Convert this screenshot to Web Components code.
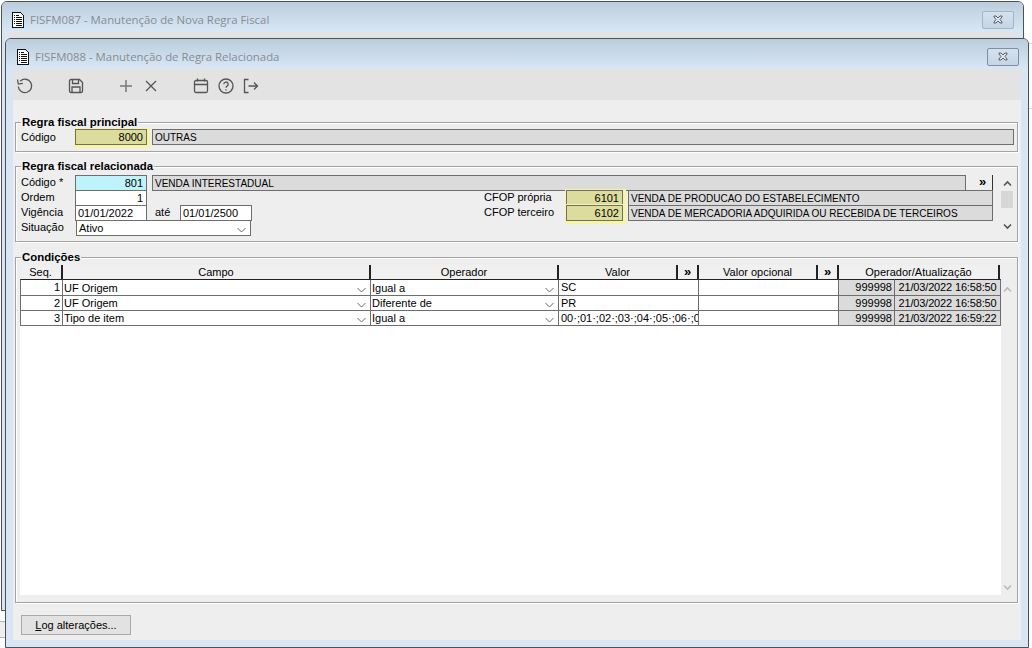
<!DOCTYPE html>
<html lang="pt">
<head>
<meta charset="utf-8">
<title>FISFM088</title>
<style>
    html, body { margin: 0; height: 100%; background: #fff; overflow: hidden; }
    body { position: relative; width: 1032px; height: 648px; font: 11px "Liberation Sans", Arial, sans-serif; color: #000; }
</style>
</head>
<body>

<template id="doc-icon">
    <svg width="14" height="16" viewBox="0 0 14 16" shape-rendering="crispEdges" style="flex:none">
        <path d="M1.500 .5h8l3 3v12h-11z" fill="#fff" stroke="#111"/>
        <path d="M3 3h1v1H3zM5 3h3v1H5zM3 5h1v1H3zM5 5h6v1H5zM3 7h1v1H3zM5 7h6v1H5zM3 9h1v1H3zM5 9h6v1H5zM3 11h1v1H3zM5 11h6v1H5zM5 13h6v1H5z" fill="#111"/>
    </svg>
</template>

<script>
const DOC_ICON = document.getElementById('doc-icon').innerHTML;

// what is left of other windows behind the two dialogs
class DeskBackdrop extends HTMLElement {
    constructor() {
        super();
        this.attachShadow({ mode: 'open' });
        this.shadowRoot.innerHTML = `
            <style>
                :host { position: absolute; inset: 0; display: block; }
                div { position: absolute; height: 1px; background: #b5b5b5; }
                .fill { left: 0; top: 622px; width: 5px; height: 15px; background: #eee; }
            </style>
            <div class="fill"></div>
            <div style="left:0;top:621px;width:5px"></div>
            <div style="left:0;top:637px;width:5px"></div>
            <div style="left:1029px;top:43px;width:3px;background:#ddd"></div>
            <div style="left:1029px;top:108px;width:3px;background:#ddd"></div>
        `;
    }
}

class AppWindow extends HTMLElement {
    constructor() {
        super();
        this.attachShadow({ mode: 'open' });
    }

    connectedCallback() {
        const active = this.hasAttribute('active');
        this.shadowRoot.innerHTML = `
            <style>
                :host {
                    position: absolute;
                    left: ${this.getAttribute('x')}px;
                    top: ${this.getAttribute('y')}px;
                    width: ${this.getAttribute('w')}px;
                    height: ${this.getAttribute('h')}px;
                    box-sizing: border-box;
                    display: flex;
                    flex-direction: column;
                    border: 1px solid #4c5157;
                    border-radius: 6px 6px 0 0;
                    background: #d8e5f3;
                }
                .title {
                    flex: none;
                    box-sizing: border-box;
                    height: 30px;
                    display: flex;
                    align-items: center;
                    gap: 5px;
                    padding: 5px 9px 0 ${active ? 10 : 9}px;
                    border-radius: 5px 5px 0 0;
                    background: linear-gradient(#bbcddd, #d9e7f5);
                }
                .title span {
                    flex: 1;
                    font: 11.4px "Open Sans", "Noto Sans", sans-serif;
                    color: #878c92;
                    white-space: nowrap;
                }
                .close {
                    flex: none;
                    box-sizing: border-box;
                    width: 32px;
                    height: 18px;
                    display: flex;
                    align-items: center;
                    justify-content: center;
                    border: 1px solid ${active ? '#7f8ea3' : '#a5b5c6'};
                    border-radius: 2px;
                    background: linear-gradient(#d5e1ed, #c5d5e6);
                }
                .body {
                    flex: 1;
                    min-height: 0;
                    margin: 0 7px 7px 7px;
                    display: flex;
                    flex-direction: column;
                    background: ${active ? '#eee' : '#e3e3e3'};
                }
            </style>
            <div class="title">
                ${DOC_ICON}
                <span>${this.getAttribute('caption')}</span>
                <div class="close">
                    <svg width="12" height="9" viewBox="0 0 12 9">
                        <path d="M2 1h2l2 2 2-2h2v1L8 4.500 10 7v1H8L6 6 4 8H2V7l2-2.500L2 2z" fill="#dfe7ef" stroke="#4a4f55" stroke-width=".9"/>
                    </svg>
                </div>
            </div>
            <div class="body"><slot></slot></div>
        `;
    }
}

class ToolBar extends HTMLElement {
    constructor() {
        super();
        this.attachShadow({ mode: 'open' });
        const stroke = 'fill="none" stroke="#555" stroke-width="1.300"';
        const btn = (gap, svg) => `<span style="margin-left:${gap}px">${svg}</span>`;
        this.shadowRoot.innerHTML = `
            <style>
                :host {
                    flex: none;
                    box-sizing: border-box;
                    display: flex;
                    align-items: center;
                    height: 31px;
                    padding: 2px 0 0 3px;
                    background: #e3e3e3;
                }
                span { display: flex; }
            </style>
            ${btn(0, `<svg width="18" height="18" viewBox="0 0 18 18" ${stroke}><path d="M4.200 4.200A6.700 6.700 0 1 1 2.300 9.500"/><path d="M1.500 2.500l.8 4.600 4.600-.8"/></svg>`)}
            ${btn(33, `<svg width="18" height="18" viewBox="0 0 18 18" ${stroke}><path d="M2.500 4a1.500 1.500 0 0 1 1.500-1.500h8.500l3 3V14a1.500 1.500 0 0 1-1.500 1.500H4A1.500 1.500 0 0 1 2.500 14z"/><path d="M5.500 2.500v4h6v-4M5 15.500v-5.500h8v5.500"/></svg>`)}
            ${btn(33, `<svg width="16" height="16" viewBox="0 0 16 16" fill="none" stroke="#777" stroke-width="1.500"><path d="M8 2v12M2 8h12"/></svg>`)}
            ${btn(9, `<svg width="16" height="16" viewBox="0 0 16 16" ${stroke}><path d="M3 3l10 10M13 3L3 13"/></svg>`)}
            ${btn(33, `<svg width="18" height="18" viewBox="0 0 18 18" ${stroke}><rect x="2.500" y="3.500" width="13" height="12" rx="1.500"/><path d="M2.500 7.500h13M5.500 1.500v3M12.500 1.500v3"/></svg>`)}
            ${btn(7, `<svg width="18" height="18" viewBox="0 0 18 18" ${stroke}><circle cx="9" cy="9" r="7"/><path d="M6.800 7.200a2.200 2.200 0 1 1 3.300 1.900c-.7.400-1.100.8-1.100 1.600"/><path d="M9 12.300v1.200"/></svg>`)}
            ${btn(7, `<svg width="18" height="18" viewBox="0 0 18 18" ${stroke}><path d="M6.500 2.500h-4v13h4M6.500 9h9M12 5.500L15.500 9 12 12.500"/></svg>`)}
        `;
    }
}

class GroupBox extends HTMLElement {
    constructor() {
        super();
        this.attachShadow({ mode: 'open' });
        this.shadowRoot.innerHTML = `
            <style>
                :host { display: flex; flex-direction: column; min-height: 0; }
                fieldset {
                    flex: 1;
                    min-height: 0;
                    display: flex;
                    flex-direction: column;
                    margin: 0;
                    padding: 0;
                    border: 1px solid #a3a3a3;
                    box-shadow: 1px 1px 0 #fff, inset 1px 1px 0 #fff;
                }
                legend {
                    margin-left: 5px;
                    padding: 0 1px;
                    font: bold 11.4px/13px "Liberation Sans", Arial, sans-serif;
                }
            </style>
            <fieldset>
                <legend>${this.getAttribute('label')}</legend>
                <slot></slot>
            </fieldset>
        `;
    }
}

class FormField extends HTMLElement {
    constructor() {
        super();
        this.attachShadow({ mode: 'open' });
    }

    connectedCallback() {
        const tone = this.getAttribute('tone') || 'white';
        const colors = { white: '#fff', key: '#bff3fb', yellow: '#dcdc9c', gray: '#dbdbdb' };
        const glow = tone === 'yellow' ? 'box-shadow: 1px 1px 0 2px #f6f6a2;' : '';
        const align = this.hasAttribute('right') ? 'right' : 'left';
        const size = tone === 'gray' ? '10px' : '11px';
        this.shadowRoot.innerHTML = `
            <style>
                :host {
                    display: block;
                    box-sizing: border-box;
                    height: 16px;
                    padding: 0 3px 0 2px;
                    border: 1px solid #6e6e6e;
                    background: ${colors[tone]};
                    ${glow}
                    font: ${size}/15px "Liberation Sans", Arial, sans-serif;
                    text-align: ${align};
                    white-space: nowrap;
                    overflow: hidden;
                }
            </style>
            <slot></slot>
        `;
    }
}

class ComboBox extends HTMLElement {
    constructor() {
        super();
        this.attachShadow({ mode: 'open' });
        this.shadowRoot.innerHTML = `
            <style>
                :host {
                    display: flex;
                    align-items: center;
                    box-sizing: border-box;
                    height: 16px;
                    padding: 0 4px 0 2px;
                    border: 1px solid #6e6e6e;
                    background: #fff;
                    font: 11px/14px "Liberation Sans", Arial, sans-serif;
                    white-space: nowrap;
                    overflow: hidden;
                }
                div { flex: 1; margin-top: -1px; }
                svg { flex: none; margin-top: 3px; }
            </style>
            <div><slot></slot></div>
            <svg width="9" height="6" viewBox="0 0 9 6"><path d="M.5 1l4 4 4-4" fill="none" stroke="#666"/></svg>
        `;
    }
}

class ScrollStrip extends HTMLElement {
    constructor() {
        super();
        this.attachShadow({ mode: 'open' });
    }

    connectedCallback() {
        const disabled = this.hasAttribute('disabled');
        const color = disabled ? '#b9b9b9' : '#555';
        const arrow = d => `<svg width="9" height="7" viewBox="0 0 9 7"><path d="${d}" fill="none" stroke="${color}" stroke-width="1.600"/></svg>`;
        this.shadowRoot.innerHTML = `
            <style>
                :host {
                    display: flex;
                    flex-direction: column;
                    align-items: center;
                    width: 12px;
                    box-sizing: border-box;
                }
                svg { flex: none; }
                .track { flex: 1; width: 100%; }
                .thumb { height: 17px; background: #d6d6d6; margin-top: 4px; }
            </style>
            ${arrow('M1 5.500l3.500-3.500 3.500 3.500')}
            <div class="track">${disabled ? '' : '<div class="thumb"></div>'}</div>
            ${arrow('M1 1.500l3.500 3.500 3.500-3.500')}
        `;
    }
}

class PrincipalForm extends HTMLElement {
    constructor() {
        super();
        this.attachShadow({ mode: 'open' });
        this.shadowRoot.innerHTML = `
            <style>
                :host {
                    display: grid;
                    grid-template-columns: 54px 72px 1fr;
                    align-items: center;
                    padding: 0 3px 6px 5px;
                }
                form-field:last-child { margin-left: 5px; }
                label { line-height: 15px; }
            </style>
            <label>Código</label>
            <form-field tone="yellow" right>8000</form-field>
            <form-field tone="gray">OUTRAS</form-field>
        `;
    }
}

class RelatedForm extends HTMLElement {
    constructor() {
        super();
        this.attachShadow({ mode: 'open' });
        this.shadowRoot.innerHTML = `
            <style>
                :host {
                    display: flex;
                    gap: 7px;
                    box-sizing: border-box;
                    height: 68px;
                    padding: 2px 4px 5px 5px;
                }
                .form {
                    flex: 1;
                    display: grid;
                    grid-template-columns: 54px 72px 5px 29px 72px 231px 82px 57px 5px 1fr;
                    grid-auto-rows: 15px;
                    min-width: 0;
                }
                label { line-height: 14px; }
                .name { grid-column: 3 / -1; display: flex; gap: 7px; }
                .name form-field { flex: 1; margin-left: 5px; }
                .more {
                    flex: none;
                    box-sizing: border-box;
                    width: 20px;
                    height: 15px;
                    text-align: center;
                    border-right: 1px solid #333;
                    font: bold 13px/13px "Liberation Sans", Arial, sans-serif;
                    margin-right: 1px;
                }
                .sp { grid-column: 3 / span 4; }
                .cfop { grid-column: 7; }
                .code { grid-column: 8; }
                .desc { grid-column: 10; margin-right: 1px; }
                .ate { grid-column: 4; padding-left: 3px; }
                .date2 { grid-column: 5; margin-left: -1px; margin-right: 1px; }
                .combo { grid-column: 2 / span 4; margin-right: 2px; margin-left: 1px; }
                scroll-strip { padding: 5px 0 6px; }
            </style>
            <div class="form">
                <label>Código *</label>
                <form-field tone="key" right>801</form-field>
                <div class="name"><form-field tone="gray">VENDA INTERESTADUAL</form-field><div class="more">»</div></div>

                <label>Ordem</label>
                <form-field right>1</form-field>
                <div class="sp"></div>
                <label class="cfop">CFOP própria</label>
                <form-field class="code" tone="yellow" right>6101</form-field>
                <form-field class="desc" tone="gray">VENDA DE PRODUCAO DO ESTABELECIMENTO</form-field>

                <label>Vigência</label>
                <form-field>01/01/2022</form-field>
                <label class="ate">até</label>
                <form-field class="date2">01/01/2500</form-field>
                <label class="cfop">CFOP terceiro</label>
                <form-field class="code" tone="yellow" right>6102</form-field>
                <form-field class="desc" tone="gray">VENDA DE MERCADORIA ADQUIRIDA OU RECEBIDA DE TERCEIROS</form-field>

                <label>Situação</label>
                <combo-box class="combo">Ativo</combo-box>
            </div>
            <scroll-strip></scroll-strip>
        `;
    }
}

class ConditionGrid extends HTMLElement {
    constructor() {
        super();
        this.attachShadow({ mode: 'open' });
        this._rows = [
            { seq: 1, campo: 'UF Origem', op: 'Igual a', valor: 'SC', user: '999998', date: '21/03/2022 16:58:50' },
            { seq: 2, campo: 'UF Origem', op: 'Diferente de', valor: 'PR', user: '999998', date: '21/03/2022 16:58:50' },
            { seq: 3, campo: 'Tipo de item', op: 'Igual a', valor: '00·;01·;02·;03·;04·;05·;06·;07·', user: '999998', date: '21/03/2022 16:59:22' }
        ];
        this.render();
    }

    render() {
        this.shadowRoot.innerHTML = `
            <style>
                :host {
                    flex: 1;
                    min-height: 0;
                    display: flex;
                    flex-direction: column;
                    padding: 1px 0 7px 4px;
                }
                .head {
                    flex: none;
                    display: grid;
                    grid-template-columns: 43px 308px 188px 119px 21px 119px 21px 161px;
                    height: 14px;
                }
                .head div {
                    box-sizing: border-box;
                    text-align: center;
                    line-height: 14px;
                    border-right: 2px solid #222;
                    background: #f0f0f0;
                    white-space: nowrap;
                }
                .head .more { font: bold 13px/13px "Liberation Sans", Arial, sans-serif; }
                .main { flex: 1; min-height: 0; display: flex; }
                .body { flex: none; width: 981px; background: #fff; }
                .row {
                    display: grid;
                    grid-template-columns: 43px 308px 188px 140px 140px 56px 106px;
                    height: 15px;
                }
                .row:first-child { height: 17px; }
                .row > * {
                    box-sizing: border-box;
                    height: 100%;
                    border: 0 solid #6e6e6e;
                    border-width: 0 1px 1px 0;
                    padding: 0 2px 0 1px;
                    line-height: 14px;
                    white-space: nowrap;
                    overflow: hidden;
                    font-size: 11px;
                }
                .row:first-child > * { border-top: 1px solid #222; }
                .seq { text-align: right; border-left: 1px solid #6e6e6e !important; }
                .user { text-align: right; background: #dbdbdb; }
                .date { background: #dbdbdb; text-align: center; padding: 0 !important; letter-spacing: -.15px; }
                .valor { padding-left: 2px !important; }
                .row .seq { padding-right: 2px; }
                .combo { display: flex; align-items: center; justify-content: space-between; padding-right: 4px !important; }
                .combo svg { flex: none; margin-top: 4px; }
                scroll-strip { flex: 1; width: auto; padding: 7px 4px 4px 0; }
            </style>
            <div class="head">
                <div>Seq.</div><div>Campo</div><div>Operador</div><div>Valor</div><div class="more">»</div><div>Valor opcional</div><div class="more">»</div><div>Operador/Atualização</div>
            </div>
            <div class="main">
                <div class="body">
                    ${this._rows.map(row => `
                        <div class="row">
                            <div class="seq">${row.seq}</div>
                            <div class="combo">${row.campo}${this.chevron()}</div>
                            <div class="combo">${row.op}${this.chevron()}</div>
                            <div class="valor">${row.valor}</div>
                            <div></div>
                            <div class="user">${row.user}</div>
                            <div class="date">${row.date}</div>
                        </div>
                    `).join('')}
                </div>
                <scroll-strip disabled></scroll-strip>
            </div>
        `;
    }

    chevron() {
        return '<svg width="9" height="6" viewBox="0 0 9 6"><path d="M.5 1l4 4 4-4" fill="none" stroke="#666"/></svg>';
    }
}

class FootBar extends HTMLElement {
    constructor() {
        super();
        this.attachShadow({ mode: 'open' });
        this.shadowRoot.innerHTML = `
            <style>
                :host { flex: none; display: block; padding: 12px 0 5px 8px; }
                button {
                    display: block;
                    box-sizing: border-box;
                    width: 110px;
                    height: 20px;
                    padding: 0;
                    border: 1px solid #a9a9a9;
                    background: #e2e2e2;
                    font: 11px "Liberation Sans", Arial, sans-serif;
                    color: #000;
                }
                u { text-decoration: underline; }
            </style>
            <button><u>L</u>og alterações...</button>
        `;
    }
}

class FormPage extends HTMLElement {
    constructor() {
        super();
        this.attachShadow({ mode: 'open' });
        this.shadowRoot.innerHTML = `
            <style>
                :host { flex: 1; min-height: 0; display: flex; flex-direction: column; padding: 16px 3px 0 2px; }
                .first { margin-bottom: 8px; }
                .second { margin-bottom: 9px; }
                .third { flex: 1; }
            </style>
            <group-box class="first" label="Regra fiscal principal"><principal-form></principal-form></group-box>
            <group-box class="second" label="Regra fiscal relacionada"><related-form></related-form></group-box>
            <group-box class="third" label="Condições"><condition-grid></condition-grid></group-box>
        `;
    }
}

customElements.define('desk-backdrop', DeskBackdrop);
customElements.define('app-window', AppWindow);
customElements.define('tool-bar', ToolBar);
customElements.define('group-box', GroupBox);
customElements.define('form-field', FormField);
customElements.define('combo-box', ComboBox);
customElements.define('scroll-strip', ScrollStrip);
customElements.define('principal-form', PrincipalForm);
customElements.define('related-form', RelatedForm);
customElements.define('condition-grid', ConditionGrid);
customElements.define('foot-bar', FootBar);
customElements.define('form-page', FormPage);
</script>

<desk-backdrop></desk-backdrop>
<app-window x="1" y="1" w="1023" h="610" caption="FISFM087 - Manutenção de Nova Regra Fiscal"></app-window>
<app-window x="5" y="38" w="1024" h="610" caption="FISFM088 - Manutenção de Regra Relacionada" active>
    <tool-bar></tool-bar>
    <form-page></form-page>
    <foot-bar></foot-bar>
</app-window>
</body>
</html>
